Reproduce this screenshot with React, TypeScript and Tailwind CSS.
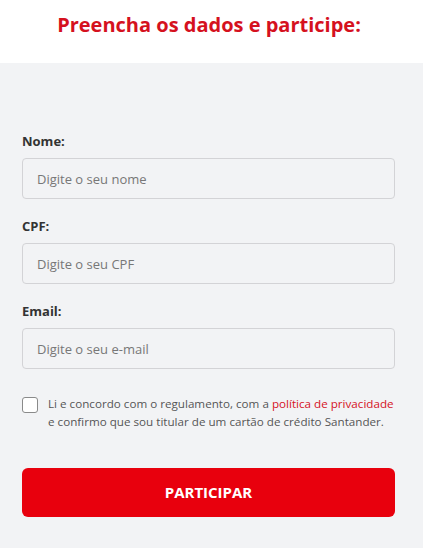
import React from "react";

function Field({ label, placeholder }: { label: string; placeholder: string }) {
  return (
    <div className="flex flex-col">
      <label className="text-[13px] font-bold text-[#333] leading-[18px] mb-[8px]">{label}</label>
      <input
        className="h-[41px] w-full rounded-[4px] border border-[#d3d3d6] bg-[#f2f3f5] px-[14px] text-[13px] text-[#333] placeholder:text-[#777] outline-none"
        placeholder={placeholder}
      />
    </div>
  );
}

export default function App() {
  return (
    <div className="w-[423px] h-[548px] bg-[#f2f3f5]" style={{ fontFamily: '"Open Sans", sans-serif' }}>
      <div className="h-[63px] bg-white flex justify-center pt-[9px] pr-[5px]">
        <h1 className="text-[20px] font-bold text-[#d5111e] leading-[32px]">Preencha os dados e participe:</h1>
      </div>
      <div className="pl-[22px] pr-[28px] pt-[69px]">
        <div className="flex flex-col gap-[18px]">
          <Field label="Nome:" placeholder="Digite o seu nome" />
          <Field label="CPF:" placeholder="Digite o seu CPF" />
          <Field label="Email:" placeholder="Digite o seu e-mail" />
        </div>
        <div className="flex items-start gap-[10px] mt-[26px]">
          <div className="mt-[2px] w-[16px] h-[16px] shrink-0 rounded-[3px] border border-[#8a8a8a] bg-white" />
          <p className="text-[11.65px] leading-[18px] text-[#555] whitespace-nowrap">
            Li e concordo com o regulamento, com a <span className="text-[#d5111e]">política de privacidade</span>
            <br />
            e confirmo que sou titular de um cartão de crédito Santander.
          </p>
        </div>
        <button className="mt-[37px] w-full h-[49px] rounded-[6px] bg-[#e8000d] text-white text-[15px] font-bold">
          PARTICIPAR
        </button>
      </div>
    </div>
  );
}
